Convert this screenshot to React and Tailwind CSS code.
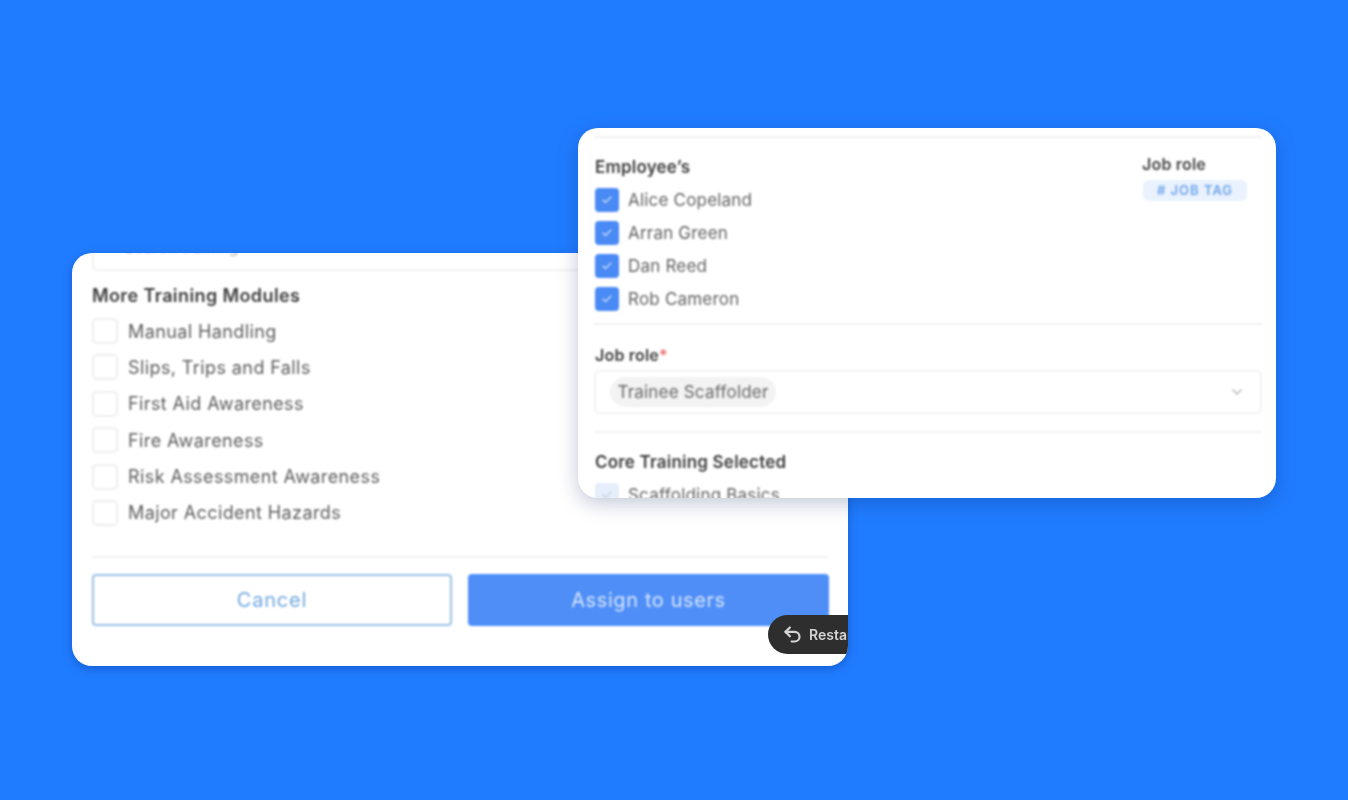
import React from 'react';
import { Check, ChevronDown, Undo2 } from 'lucide-react';

const modules = [
  'Manual Handling',
  'Slips, Trips and Falls',
  'First Aid Awareness',
  'Fire Awareness',
  'Risk Assessment Awareness',
  'Major Accident Hazards',
];

const employees = ['Alice Copeland', 'Arran Green', 'Dan Reed', 'Rob Cameron'];

const font = { fontFamily: 'Inter, "Noto Sans", sans-serif' };

const App = () => {
  return (
    <div className="relative h-[800px] overflow-hidden bg-[#207cff] pt-[253px] pl-[72px]" style={font}>
      {/* Back card */}
      <div className="relative h-[413px] w-[776px] overflow-hidden rounded-[20px] bg-white shadow-[0_3px_10px_rgba(0,40,120,0.35)]">
        <div className="flex h-full flex-col px-5 blur-[0.85px]">
          <div className="-mt-[30px] flex h-[48px] w-full shrink-0 items-center rounded-md border-2 border-[#f2f2f2] pl-[30px] text-[16px] text-[#b5b5b5]">
            Search training
          </div>
          <h3 className="mt-[13px] text-[18px] leading-6 font-semibold tracking-[0.4px] text-[#3d3d3d]">
            More Training Modules
          </h3>
          <div className="mt-[10px] flex flex-col gap-[10.4px]">
            {modules.map((name) => (
              <div key={name} className="flex h-[26px] items-center gap-[10px]">
                <span className="h-[26px] w-[26px] shrink-0 rounded-[5px] border-2 border-[#eeeeee] bg-white" />
                <span className="text-[18px] tracking-[0.4px] text-[#5c5c5c]">{name}</span>
              </div>
            ))}
          </div>
          <div className="mt-[30px] h-[2px] w-full bg-[#f1f1f1]" />
          <div className="mt-[16px] flex gap-4">
            <button className="h-[52px] w-[360px] shrink-0 rounded-[4px] border-2 border-[#9cc2e8] bg-white text-[20px] tracking-[0.8px] text-[#72a8e0]">
              Cancel
            </button>
            <button className="h-[52px] w-[361px] shrink-0 rounded-[4px] bg-[#4f8ef7] text-[20px] tracking-[0.6px] text-[#d6e5fb]">
              Assign to users
            </button>
          </div>
        </div>
        {/* Floating restart pill, runs off the card edge */}
        <div className="absolute top-[362px] left-[696px] flex h-[39px] w-[120px] items-center gap-[6px] rounded-[20px] bg-[#2e2e2e] pl-[14px] text-[14px] font-semibold text-[#d4d4d4] blur-[0.5px]">
          <Undo2 size={21} strokeWidth={2.5} className="shrink-0" />
          <span>Restart</span>
        </div>
      </div>

      {/* Front card */}
      <div className="absolute top-[128px] left-[578px] h-[370px] w-[698px] overflow-hidden rounded-[20px] bg-white shadow-[0_5px_20px_rgba(0,30,90,0.25)]">
        <div className="pr-[14px] pl-4 blur-[0.85px]">
          <div className="mt-2 h-[2px] bg-[#f1f1f1]" />
          <div className="flex justify-between pl-px">
            <div>
              <h3 className="mt-[19px] text-[17px] leading-5 font-semibold tracking-[0.2px] text-[#3d3d3d]">Employee’s</h3>
              <div className="mt-[11px] flex flex-col gap-[9px]">
                {employees.map((name) => (
                  <div key={name} className="flex h-6 items-center gap-[9px]">
                    <span className="flex h-6 w-6 shrink-0 items-center justify-center rounded-[4px] bg-[#4a8af4]">
                      <Check size={12} strokeWidth={2.5} className="text-[#c9ddfb]" />
                    </span>
                    <span className="pt-0.5 text-[17px] tracking-[0.2px] text-[#626262]">{name}</span>
                  </div>
                ))}
              </div>
            </div>
            <div className="mt-[16px] mr-[14px] w-[106px]">
              <div className="text-[16px] leading-5 font-semibold tracking-[0.2px] text-[#444]">Job role</div>
              <div className="mt-[6px] ml-px flex h-[21px] w-[104px] items-center justify-center rounded-[6px] bg-[#e9f2fe] text-[13px] font-semibold tracking-[1px] text-[#6ea5ec]">
                # JOB TAG
              </div>
            </div>
          </div>
          <div className="mt-[12px] h-[2px] bg-[#f2f2f2]" />
          <div className="mt-[20px] pl-px text-[16px] leading-5 font-semibold tracking-[0.2px] text-[#3d3d3d]">
            Job role<span className="text-[#ef6a6a]">*</span>
          </div>
          <div className="mt-[5px] flex h-[44px] items-center justify-between rounded-[6px] border-2 border-[#f2f2f2] pr-[15px] pl-[14px]">
            <span className="flex h-[30px] w-[166px] items-center justify-center rounded-[15px] bg-[#f3f3f3] pt-0.5 text-[17px] tracking-[0.2px] text-[#666]">
              Trainee Scaffolder
            </span>
            <ChevronDown size={16} strokeWidth={2.5} className="text-[#bbb]" />
          </div>
          <div className="mt-[17px] h-[2px] bg-[#f3f3f3]" />
          <h3 className="mt-[19px] pl-px text-[17px] leading-5 font-semibold tracking-[0.2px] text-[#3d3d3d]">Core Training Selected</h3>
          <div className="mt-[11px] ml-px flex h-6 items-center gap-[9px]">
            <span className="flex h-6 w-6 shrink-0 items-center justify-center rounded-[4px] bg-[#e6eefb]">
              <Check size={12} strokeWidth={2.5} className="text-[#c3d0e2]" />
            </span>
            <span className="pt-0.5 text-[17px] tracking-[0.2px] text-[#626262]">Scaffolding Basics</span>
          </div>
        </div>
      </div>
    </div>
  );
};

export default App;
